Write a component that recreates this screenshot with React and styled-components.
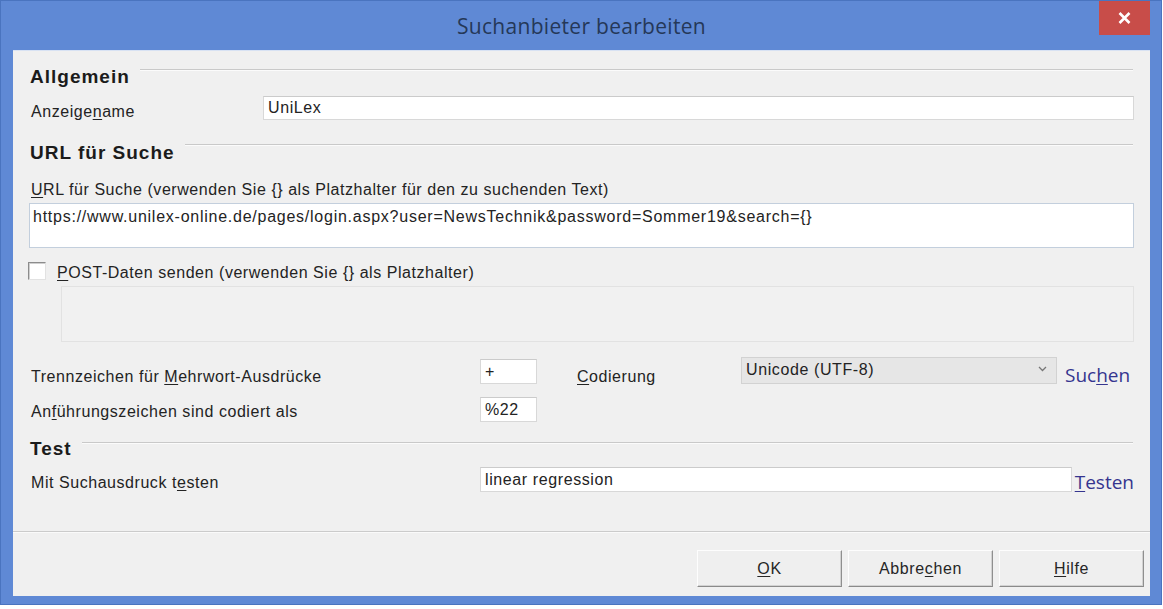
import React from 'react';
import styled, { createGlobalStyle } from 'styled-components';

const GlobalStyle = createGlobalStyle`
  html, body {
    margin: 0;
    padding: 0;
    background: #ffffff;
  }
  body {
    font-family: "Liberation Sans", Arial, sans-serif;
    font-size: 16px;
    color: #232323;
  }
`;

const Window = styled.div`
  box-sizing: border-box;
  width: 1162px;
  height: 605px;
  border: 1px solid #4a74bf;
  background: #5f89d5;
  display: flex;
  flex-direction: column;
`;

const TitleBar = styled.div`
  height: 49px;
  flex-shrink: 0;
  display: grid;
  grid-template-columns: 1fr auto 1fr;
  align-items: center;
  padding: 0 11px 0 12px;
`;

const Title = styled.div`
  grid-column: 2;
  font-family: "Open Sans", "Noto Sans", sans-serif;
  font-size: 21px;
  line-height: 28px;
  letter-spacing: 0.3px;
  color: #253858;
`;

const CloseButton = styled.div`
  grid-column: 3;
  justify-self: end;
  align-self: start;
  width: 51px;
  height: 34px;
  background: #c84d49;
  display: flex;
  align-items: center;
  justify-content: center;
`;

const Client = styled.div`
  flex: 1;
  margin: 0 11px 8px 12px;
  background: #f0f0f0;
  box-shadow: inset 0 1px 0 #d8e2f3;
  display: flex;
  flex-direction: column;
`;

const Form = styled.div`
  flex: 1;
  padding: 17px 16px 0 18px;
  display: flex;
  flex-direction: column;
`;

const SectionHead = styled.div`
  display: flex;
  align-items: flex-start;
  margin-top: ${(p) => p.$top || 0}px;
  margin-left: -1px;
`;

const SectionTitle = styled.div`
  font-size: 19px;
  line-height: 20px;
  font-weight: bold;
  letter-spacing: 1px;
  color: #1b1b1b;
`;

const SectionLine = styled.div`
  flex: 1;
  margin: ${(p) => p.$lineTop || 3}px 1px 0 10px;
  border-top: 1px solid #c9c9c9;
  box-shadow: 0 1px 0 #fbfbfb;
`;

const Row = styled.div`
  display: flex;
  align-items: flex-start;
  height: ${(p) => p.$h}px;
  margin-top: ${(p) => p.$top || 0}px;
`;

const Label = styled.div`
  flex-shrink: 0;
  width: ${(p) => (p.$w ? `${p.$w}px` : 'auto')};
  margin-top: ${(p) => p.$top || 0}px;
  margin-left: ${(p) => p.$left || 0}px;
  line-height: 20px;
  letter-spacing: 0.55px;
  white-space: nowrap;
`;

const Key = styled.span`
  text-decoration: underline;
  text-underline-offset: 2px;
`;

const TextField = styled.div`
  box-sizing: border-box;
  height: ${(p) => p.$h || 25}px;
  width: ${(p) => (p.$w ? `${p.$w}px` : 'auto')};
  flex: ${(p) => (p.$w ? '0 0 auto' : '1')};
  margin-top: ${(p) => p.$top || 0}px;
  background: #ffffff;
  border: 1px solid #d8d8d8;
  border-top-color: #cbcbcb;
  padding: 0 4px;
  line-height: ${(p) => (p.$h || 25) - 2}px;
  letter-spacing: 0.6px;
  white-space: nowrap;
  overflow: hidden;
`;

const UrlArea = styled.div`
  box-sizing: border-box;
  height: 45px;
  margin: 3px 0 0 -2px;
  background: #ffffff;
  border: 1px solid #c3cfdd;
  padding: 3px 3px;
  line-height: 20px;
  letter-spacing: 0.75px;
  white-space: nowrap;
  overflow: hidden;
`;

const PostArea = styled.div`
  box-sizing: border-box;
  height: 56px;
  margin: 4px 0 0 30px;
  background: #f1f1f1;
  border: 1px solid #e2e2e2;
`;

const Checkbox = styled.div`
  box-sizing: border-box;
  width: 18px;
  height: 18px;
  margin: 2px 0 0 -3px;
  background: #ffffff;
  border: 1px solid #e2e2e2;
  border-top-color: #8c8c8c;
  border-left-color: #8c8c8c;
  box-shadow: inset 1px 1px 0 #cfcfcf;
`;

const Select = styled.div`
  box-sizing: border-box;
  width: 316px;
  height: 27px;
  display: flex;
  align-items: flex-start;
  justify-content: space-between;
  background: #e6e6e6;
  border: 1px solid #d2d2d2;
  padding: 2px 9px 0 4px;
  line-height: 20px;
  letter-spacing: 0.6px;
`;

const Chevron = styled.svg`
  margin-top: 6px;
`;

const Link = styled.div`
  flex-shrink: 0;
  margin: ${(p) => p.$top || 0}px 0 0 ${(p) => p.$left || 0}px;
  font-family: "Open Sans", "Noto Sans", sans-serif;
  font-size: 19px;
  line-height: 24px;
  color: #35358f;
`;

const Separator = styled.div`
  height: 1px;
  background: #cbcbcb;
  box-shadow: 0 1px 0 #fafafa;
`;

const ButtonBar = styled.div`
  display: flex;
  justify-content: flex-end;
  gap: 6px;
  padding: 18px 6px 9px 0;
`;

const Button = styled.div`
  box-sizing: border-box;
  width: 145px;
  height: 37px;
  display: flex;
  align-items: center;
  justify-content: center;
  background: #efefef;
  border: 1px solid;
  border-color: #fdfdfd #8f8f8f #8a8a8a #fdfdfd;
  box-shadow: inset -1px -1px 0 #d2d2d2;
  letter-spacing: 0.6px;
  color: #262626;
`;

export default function App() {
  return (
    <>
      <GlobalStyle />
      <Window>
        <TitleBar>
          <Title>Suchanbieter bearbeiten</Title>
          <CloseButton>
            <svg width="13" height="12" viewBox="0 0 13 12">
              <path d="M1.5 1 L11.5 11 M11.5 1 L1.5 11" stroke="#ffffff" strokeWidth="2.6" />
            </svg>
          </CloseButton>
        </TitleBar>
        <Client>
          <Form>
            <SectionHead>
              <SectionTitle>Allgemein</SectionTitle>
              <SectionLine $lineTop={2} />
            </SectionHead>
            <Row $h={24} $top={9}>
              <Label $w={232} $top={6}>
                Anzeige<Key>n</Key>ame
              </Label>
              <TextField $h={24}>UniLex</TextField>
            </Row>

            <SectionHead $top={23}>
              <SectionTitle>URL für Suche</SectionTitle>
              <SectionLine $lineTop={1} />
            </SectionHead>
            <Row $h={20} $top={17}>
              <Label>
                <Key>U</Key>RL für Suche (verwenden Sie {'{}'} als Platzhalter für den zu suchenden Text)
              </Label>
            </Row>
            <UrlArea>
              https://www.unilex-online.de/pages/login.aspx?user=NewsTechnik&amp;password=Sommer19&amp;search={'{}'}
            </UrlArea>
            <Row $h={22} $top={12}>
              <Checkbox />
              <Label $left={11} $top={3}>
                <Key>P</Key>OST-Daten senden (verwenden Sie {'{}'} als Platzhalter)
              </Label>
            </Row>
            <PostArea />

            <Row $h={27} $top={15}>
              <Label $w={449} $top={10}>
                Trennzeichen für <Key>M</Key>ehrwort-Ausdrücke
              </Label>
              <TextField $w={57} $top={2}>+</TextField>
              <Label $w={164} $left={40} $top={10}>
                <Key>C</Key>odierung
              </Label>
              <Select>
                <span>Unicode (UTF-8)</span>
                <Chevron width="9" height="6" viewBox="0 0 9 6">
                  <path d="M1 1 L4.5 4.5 L8 1" fill="none" stroke="#777777" strokeWidth="1.3" />
                </Chevron>
              </Select>
              <Link $left={8} $top={6}>
                Suc<Key>h</Key>en
              </Link>
            </Row>
            <Row $h={25} $top={13}>
              <Label $w={449} $top={5}>
                An<Key>f</Key>ührungszeichen sind codiert als
              </Label>
              <TextField $w={57}>%22</TextField>
            </Row>

            <SectionHead $top={17}>
              <SectionTitle>Test</SectionTitle>
              <SectionLine $lineTop={3} />
            </SectionHead>
            <Row $h={25} $top={8}>
              <Label $w={449} $top={6}>
                Mit Suchausdruck t<Key>e</Key>sten
              </Label>
              <TextField>linear regression</TextField>
              <Link $left={3} $top={3}>
                <Key>T</Key>esten
              </Link>
            </Row>
          </Form>
          <Separator />
          <ButtonBar>
            <Button>
              <span>
                <Key>O</Key>K
              </span>
            </Button>
            <Button>
              <span>
                Abbre<Key>c</Key>hen
              </span>
            </Button>
            <Button>
              <span>
                <Key>H</Key>ilfe
              </span>
            </Button>
          </ButtonBar>
        </Client>
      </Window>
    </>
  );
}
